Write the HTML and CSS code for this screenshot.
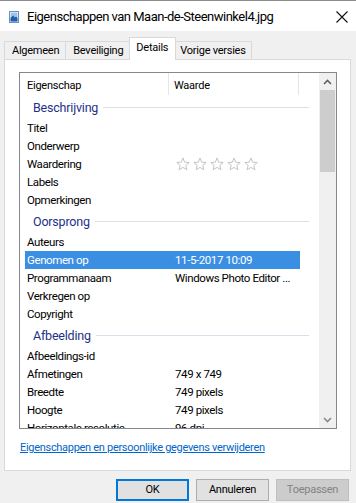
FILE: index.html
```html
<!DOCTYPE html>
<html lang="nl">
<head>
<meta charset="utf-8">
<title>Eigenschappen van Maan-de-Steenwinkel4.jpg</title>
<link rel="stylesheet" href="styles.css">
</head>
<body>
<div class="window">
  <div class="titlebar">
    <svg class="app-icon" width="10" height="12" viewBox="0 0 10 12">
      <rect x="0.5" y="0.5" width="9" height="11" fill="#ffffff" stroke="#6f8fbf"/>
      <rect x="1.5" y="1.5" width="7" height="9" fill="#9cc3ec"/>
      <path d="M1.5 10.5 L1.5 7 L4 4.5 L6 6.5 L7 5.5 L8.5 7 L8.5 10.5 Z" fill="#1f5fae"/>
    </svg>
    <span class="title">Eigenschappen van Maan-de-Steenwinkel4.jpg</span>
    <svg class="close" width="12" height="12" viewBox="0 0 12 12">
      <path d="M0.5 0.5 L11.5 11.5 M11.5 0.5 L0.5 11.5" stroke="#111" stroke-width="1.1" fill="none"/>
    </svg>
  </div>
  <div class="client">
    <div class="tabs">
      <div class="tab">Algemeen</div>
      <div class="tab">Beveiliging</div>
      <div class="tab active">Details</div>
      <div class="tab last">Vorige versies</div>
    </div>
    <div class="panel">
      <div class="listview">
        <div class="rows">
          <div class="header">
            <div class="hcol c1">Eigenschap</div>
            <div class="hcol c2">Waarde</div>
          </div>
          <div class="group"><span>Beschrijving</span><i></i></div>
          <div class="row"><span>Titel</span><span></span></div>
          <div class="row"><span>Onderwerp</span><span></span></div>
          <div class="row"><span>Waardering</span>
            <span class="stars">
              <svg width="82" height="14" viewBox="0 0 82 14">
                <g fill="none" stroke="#c4c4c4" stroke-width="1">
                  <path d="M7 1 L8.7 5.2 L13.2 5.5 L9.8 8.4 L10.9 12.8 L7 10.4 L3.1 12.8 L4.2 8.4 L0.8 5.5 L5.3 5.2 Z"/>
                  <path d="M7 1 L8.7 5.2 L13.2 5.5 L9.8 8.4 L10.9 12.8 L7 10.4 L3.1 12.8 L4.2 8.4 L0.8 5.5 L5.3 5.2 Z" transform="translate(17 0)"/>
                  <path d="M7 1 L8.7 5.2 L13.2 5.5 L9.8 8.4 L10.9 12.8 L7 10.4 L3.1 12.8 L4.2 8.4 L0.8 5.5 L5.3 5.2 Z" transform="translate(34 0)"/>
                  <path d="M7 1 L8.7 5.2 L13.2 5.5 L9.8 8.4 L10.9 12.8 L7 10.4 L3.1 12.8 L4.2 8.4 L0.8 5.5 L5.3 5.2 Z" transform="translate(51 0)"/>
                  <path d="M7 1 L8.7 5.2 L13.2 5.5 L9.8 8.4 L10.9 12.8 L7 10.4 L3.1 12.8 L4.2 8.4 L0.8 5.5 L5.3 5.2 Z" transform="translate(68 0)"/>
                </g>
              </svg>
            </span>
          </div>
          <div class="row"><span>Labels</span><span></span></div>
          <div class="row"><span>Opmerkingen</span><span></span></div>
          <div class="group"><span>Oorsprong</span><i></i></div>
          <div class="row"><span>Auteurs</span><span></span></div>
          <div class="row selected"><span>Genomen op</span><span>11-5-2017 10:09</span></div>
          <div class="row"><span>Programmanaam</span><span>Windows Photo Editor ...</span></div>
          <div class="row"><span>Verkregen op</span><span></span></div>
          <div class="row"><span>Copyright</span><span></span></div>
          <div class="group"><span>Afbeelding</span><i></i></div>
          <div class="row"><span>Afbeeldings-id</span><span></span></div>
          <div class="row"><span>Afmetingen</span><span>749 x 749</span></div>
          <div class="row"><span>Breedte</span><span>749 pixels</span></div>
          <div class="row"><span>Hoogte</span><span>749 pixels</span></div>
          <div class="row"><span>Horizontale resolutie</span><span>96 dpi</span></div>
        </div>
        <div class="scrollbar">
          <div class="arrow">
            <svg width="9" height="6" viewBox="0 0 9 6"><path d="M1 5 L4.5 1.5 L8 5" fill="none" stroke="#606060" stroke-width="1.6"/></svg>
          </div>
          <div class="thumb"></div>
          <div class="track"></div>
          <div class="arrow">
            <svg width="9" height="6" viewBox="0 0 9 6"><path d="M1 1 L4.5 4.5 L8 1" fill="none" stroke="#8a8a8a" stroke-width="1.6"/></svg>
          </div>
        </div>
      </div>
      <a class="link" href="#">Eigenschappen en persoonlijke gegevens verwijderen</a>
    </div>
    <div class="buttons">
      <div class="btn default">OK</div>
      <div class="btn">Annuleren</div>
      <div class="btn disabled">Toepassen</div>
    </div>
  </div>
</div>
</body>
</html>
```
FILE: styles.css
```css
html, body {
  margin: 0;
  padding: 0;
}
body {
  width: 356px;
  height: 503px;
  overflow: hidden;
  background: #f0f0f0;
  font-family: Roboto, "Liberation Sans", Arial, sans-serif;
  font-size: 11px;
  letter-spacing: -0.25px;
  color: #000;
}
.window {
  height: 503px;
  border-top: 1px solid #8c8c8c;
  box-sizing: border-box;
}
.titlebar {
  height: 30px;
  background: #fff;
  display: flex;
  align-items: center;
}
.app-icon {
  margin-left: 9px;
  margin-top: 1px;
  flex: none;
}
.title {
  margin-left: 8px;
  font-size: 13px;
  letter-spacing: -0.5px;
  flex: 1;
  color: #000;
}
.close {
  margin-right: 8px;
  margin-top: 1px;
  flex: none;
}
.client {
  padding-top: 6px;
}
.tabs {
  display: flex;
  align-items: flex-end;
  margin-left: 4px;
  height: 22px;
  position: relative;
  z-index: 1;
}
.tab {
  height: 18px;
  box-sizing: border-box;
  border: 1px solid #d9d9d9;
  border-bottom: none;
  border-right: none;
  background: #f0f0f0;
  padding: 0 6px 0 7px;
  line-height: 18px;
  white-space: nowrap;
}
.tab.last {
  border-right: 1px solid #d9d9d9;
  padding: 0 5px 0 4px;
}
.tab.active {
  height: 23px;
  margin-bottom: -1px;
  background: #fff;
  border-right: 1px solid #d9d9d9;
  padding: 0 7px 0 6px;
  line-height: 20px;
}
.tab.active + .tab {
  border-left: none;
}
.panel {
  margin: 0 5px 0 4px;
  height: 412px;
  box-sizing: border-box;
  border: 1px solid #d9d9d9;
  background: #fff;
  padding: 12px 0 0 14px;
}
.listview {
  width: 318px;
  height: 357px;
  box-sizing: border-box;
  border: 1px solid #828790;
  display: flex;
  background: #fff;
}
.rows {
  flex: 1;
  overflow: hidden;
}
.header {
  display: flex;
  height: 22px;
}
.hcol {
  box-sizing: border-box;
  line-height: 22px;
  padding-top: 2px;
  border-right: 1px solid #e5e5e5;
}
.hcol.c1 {
  width: 149px;
  padding-left: 7px;
}
.hcol.c2 {
  width: 130px;
  padding-left: 5px;
}
.group {
  height: 24px;
  display: flex;
  align-items: center;
  padding-left: 13px;
  color: #1e3287;
  font-size: 12.5px;
  letter-spacing: -0.2px;
}
.group span {
  white-space: nowrap;
}
.group i {
  display: block;
  flex: 1;
  height: 1px;
  background: #dcdfea;
  margin: 1px 10px 0 5px;
}
.row {
  height: 18px;
  margin-left: 5px;
  width: 275px;
  display: grid;
  grid-template-columns: 150px 125px;
  align-items: center;
  line-height: 18px;
  white-space: nowrap;
  font-size: 11.5px;
  letter-spacing: -0.4px;
}
.row span:first-child {
  padding-left: 2px;
}
.row.selected {
  background: #3b8fe3;
  color: #fff;
}
.stars {
  display: flex;
  align-items: center;
  height: 18px;
  margin-left: 1px;
}
.stars svg {
  display: block;
}
.scrollbar {
  width: 17px;
  flex: none;
  background: #f0f0f0;
  display: flex;
  flex-direction: column;
}
.arrow {
  height: 17px;
  display: flex;
  align-items: center;
  justify-content: center;
  flex: none;
}
.arrow svg {
  display: block;
}
.thumb {
  height: 82px;
  margin: 0 1px;
  background: #cdcdcd;
  flex: none;
}
.track {
  flex: 1;
}
.link {
  display: block;
  margin-top: 11px;
  margin-left: 1px;
  color: #0066cc;
  text-decoration: underline;
  line-height: 15px;
  letter-spacing: -0.3px;
  white-space: nowrap;
}
.buttons {
  display: flex;
  justify-content: flex-end;
  gap: 7px;
  margin-top: 8px;
  padding-right: 7px;
}
.btn {
  width: 73px;
  height: 22px;
  box-sizing: border-box;
  border: 1px solid #adadad;
  background: #e1e1e1;
  text-align: center;
  line-height: 20px;
}
.btn.default {
  border: 2px solid #0078d7;
  line-height: 18px;
}
.btn.disabled {
  border-color: #bfbfbf;
  background: #cccccc;
  color: #838383;
}
```
